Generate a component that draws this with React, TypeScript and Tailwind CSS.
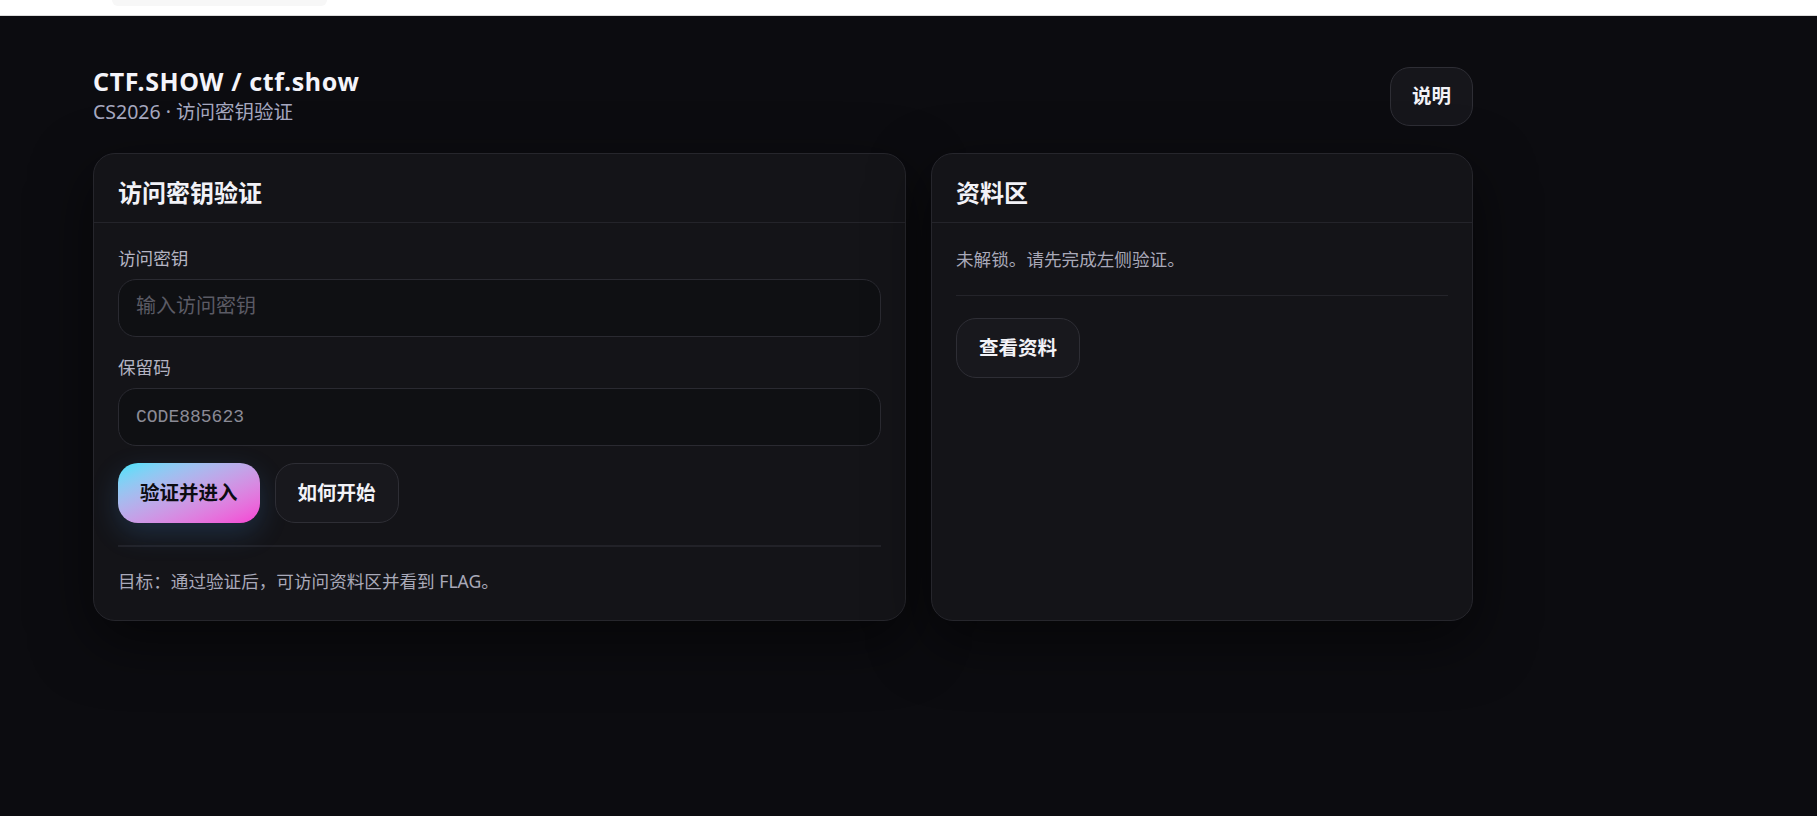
import React, { useState } from 'react';

const sans = 'font-["Noto_Sans","Noto_Sans_CJK_SC",sans-serif]';

const GhostButton: React.FC<{ children: React.ReactNode }> = ({ children }) => (
  <button className="h-[60px] px-[22px] rounded-[20px] border border-[#2e2e35] bg-[#18181d] text-[#f2f2f7] text-[19.5px] font-bold leading-none">
    {children}
  </button>
);

const App: React.FC = () => {
  const [accessKey, setAccessKey] = useState('');
  const [code, setCode] = useState('CODE885623');

  return (
    <div className={`min-h-screen flex flex-col bg-white ${sans}`}>
      {/* browser-ish top strip */}
      <div className="h-[16px] shrink-0 relative border-b border-[#dcdcdc]">
        <div className="absolute left-[112px] top-0 w-[215px] h-[6px] rounded-b-[10px] bg-[#f7f7f7]" />
      </div>

      <div className="flex-1 bg-[#0c0c10] pt-[50px] pl-[93px]">
        <div className="w-[1380px]">
          {/* header */}
          <div className="flex items-center justify-between">
            <div>
              <h1 className="text-[25px] leading-[30px] font-bold text-[#f4f4fa] tracking-[0.6px]">CTF.SHOW / ctf.show</h1>
              <p className="mt-[2px] text-[19.5px] leading-[28px] text-[#a7a9c0]">CS2026 · 访问密钥验证</p>
            </div>
            <button className="h-[59px] px-[21px] rounded-[20px] border border-[#2e2e35] bg-[#16161b] text-[#f2f2f7] text-[19.5px] font-bold">
              说明
            </button>
          </div>

          {/* panels */}
          <div className="mt-[27px] grid grid-cols-[1.5fr_1fr] gap-[25px] items-stretch">
            {/* verification card */}
            <div className="rounded-[22px] border border-[#26262c] bg-[#141418] shadow-[0_20px_60px_rgba(0,0,0,0.55)]">
              <div className="pt-[24px] pb-[14px] px-6 border-b border-[#24242a]">
                <h2 className="text-[24px] leading-[30px] font-bold text-[#f2f2f7]">访问密钥验证</h2>
              </div>
              <div className="px-6 pt-[22px] pb-[26px]">
                <label className="block text-[17.6px] leading-[26px] text-[#b4b4c3]">访问密钥</label>
                <input
                  value={accessKey}
                  onChange={(e) => setAccessKey(e.target.value)}
                  placeholder="输入访问密钥"
                  className="mt-[8px] w-full h-[58px] px-[17px] rounded-[18px] border border-[#2a2a31] bg-[#0f1013] text-[18px] text-[#8b8b96] font-['Liberation_Mono','Noto_Sans_CJK_SC',monospace] placeholder:text-[#5b5b65] placeholder:text-[20px] placeholder:font-['Noto_Sans_CJK_SC',sans-serif] outline-none"
                />
                <label className="block mt-[17px] text-[17.6px] leading-[26px] text-[#b4b4c3]">保留码</label>
                <input
                  value={code}
                  onChange={(e) => setCode(e.target.value)}
                  className="mt-[8px] w-full h-[58px] px-[17px] rounded-[18px] border border-[#2a2a31] bg-[#0f1013] text-[18px] text-[#8b8b96] font-['Liberation_Mono','Noto_Sans_CJK_SC',monospace] outline-none"
                />
                <div className="mt-[17px] flex gap-[15px]">
                  <button className="h-[60px] px-[22px] rounded-[20px] bg-linear-to-br from-[#36e4fb] to-[#f63fd4] text-[#0c0c12] text-[19.5px] font-bold shadow-[0_10px_28px_rgba(70,140,220,0.22)]">
                    验证并进入
                  </button>
                  <GhostButton>如何开始</GhostButton>
                </div>
                <div className="mt-[22px] h-[2px] bg-[#222228]" />
                <p className="mt-[21px] text-[17.6px] leading-[26px] text-[#a9a9b8]">目标：通过验证后，可访问资料区并看到 FLAG。</p>
              </div>
            </div>

            {/* materials card */}
            <div className="rounded-[22px] border border-[#26262c] bg-[#141418] shadow-[0_20px_60px_rgba(0,0,0,0.55)]">
              <div className="pt-[24px] pb-[14px] px-6 border-b border-[#24242a]">
                <h2 className="text-[24px] leading-[30px] font-bold text-[#f2f2f7]">资料区</h2>
              </div>
              <div className="px-6 pt-[23px]">
                <p className="text-[17.6px] leading-[26px] text-[#a9a9b8]">未解锁。请先完成左侧验证。</p>
                <div className="mt-[23px] h-px bg-[#24242a]" />
                <div className="mt-[22px]">
                  <GhostButton>查看资料</GhostButton>
                </div>
              </div>
            </div>
          </div>
        </div>
      </div>
    </div>
  );
};

export default App;
